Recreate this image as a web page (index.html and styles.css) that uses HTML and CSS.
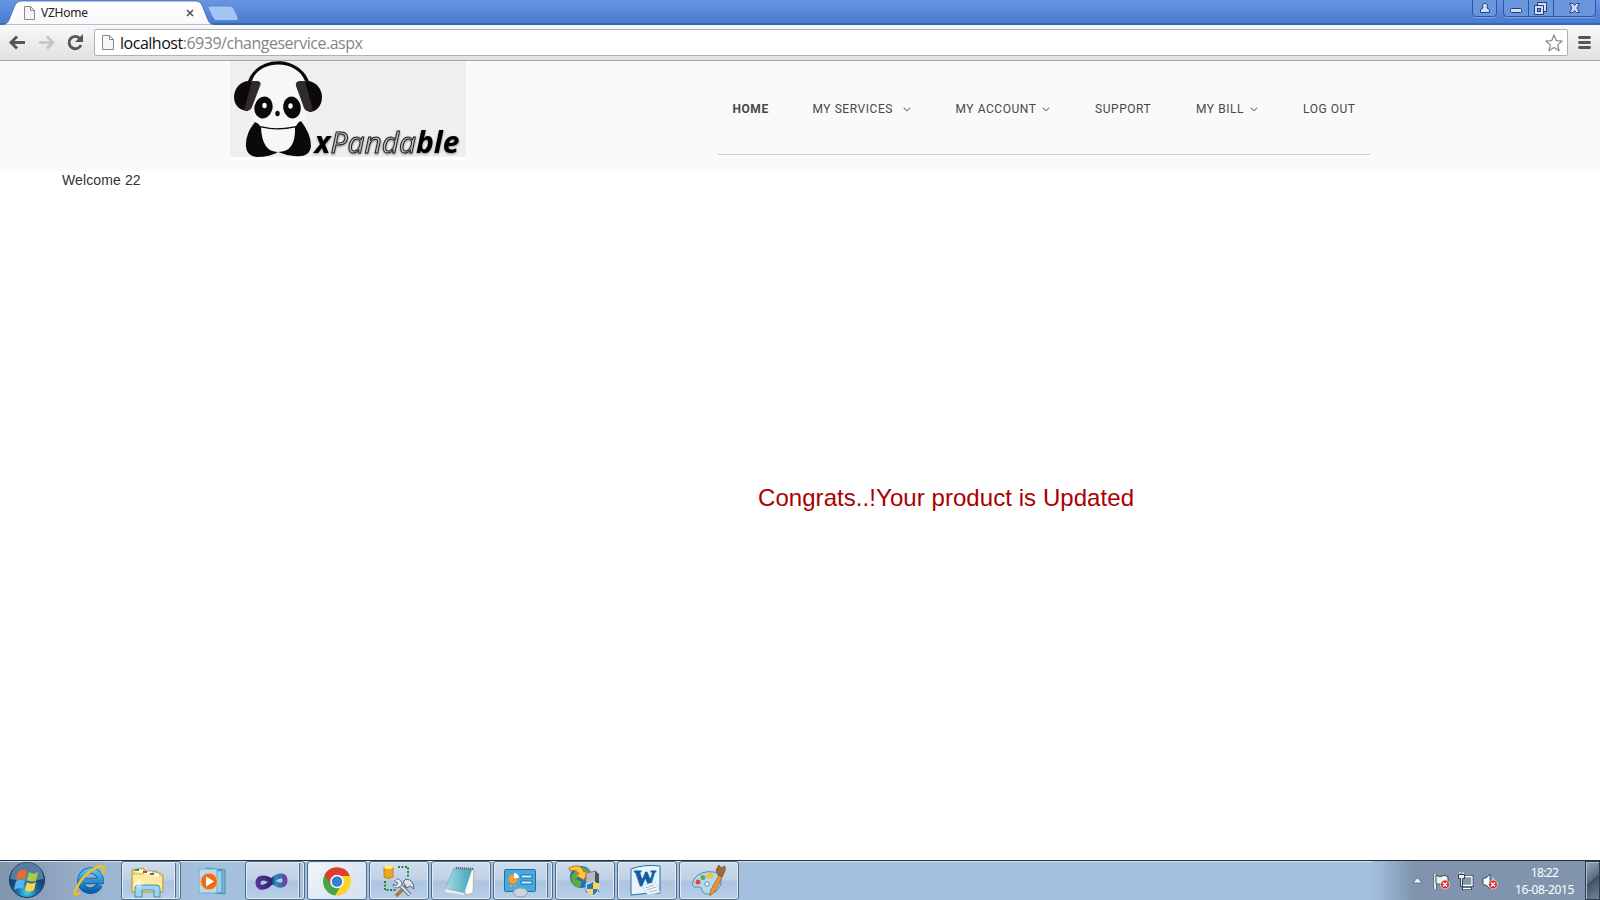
FILE: index.html
```
<!DOCTYPE html>
<html lang="en">
<head>
<meta charset="utf-8">
<title>VZHome</title>
<link rel="stylesheet" href="styles.css">
</head>
<body>
<div class="screen">
  <header class="tabstrip">
    <div class="tab">
      <svg class="tab-shape" width="242" height="25" viewBox="0 0 242 25">
        <defs><linearGradient id="tabfill" x2="0" y2="1"><stop offset="0" stop-color="#fff"/><stop offset="1" stop-color="#f8f8f8"/></linearGradient></defs>
        <path d="M0 25 Q7 25 9 20L15 5Q17 1 21 1H196Q200 1 202 5L208 20Q210 25 216 25Z" fill="url(#tabfill)" stroke="#3c62ad" stroke-width=".8"/>
        <path d="M210 6H230Q233 6 234 9L238 17.500Q239 20.500 236 20.500H217Q214 20.500 213 18L208.500 9Q207 6 210 6Z" fill="#a4c5f5" stroke="#5c87cf"/>
      </svg>
      <div class="tab-label">
        <svg width="11" height="14" viewBox="0 0 11 14"><path d="M.5.5H6.500L10.500 4.500V13.500H.5ZM6.500.5V4.500H10.500" fill="#f5f5f5" stroke="#8a8a8a"/></svg>
        <span class="tab-title">VZHome</span>
        <svg class="tab-close" width="8" height="8" viewBox="0 0 8 8"><path d="M1 1L7 7M7 1L1 7" stroke="#555" stroke-width="1.700"/></svg>
      </div>
    </div>
    <svg class="window-controls" width="128" height="18" viewBox="0 0 128 18">
      <g fill="#6a96de" stroke="#2f559f">
        <path d="M.5 0V13Q.5 16.500 4 16.500H21Q24.500 16.500 24.500 13V0"/>
        <path d="M31.500 0V13Q31.500 16.500 35 16.500H120Q123.500 16.500 123.500 13V0M56.500 0V16.500M81.500 0V16.500"/>
      </g>
      <path d="M1.500 17.500H23M33 17.500H122" stroke="#83a8e6"/>
      <g fill="#d0dff8" stroke="#263f74">
        <path d="M8.500 12.500V9.500L11 8Q9.500 3.500 13 3.500T15 8L17.500 9.500V12.500Z"/>
        <rect x="38.500" y="8.500" width="11" height="4" rx="1"/>
        <path d="M65.500 2.500H74.500V11.500H65.500Z"/><path d="M62.500 5.500H71.500V14.500H62.500Z"/><rect x="65.500" y="8.500" width="3" height="3" fill="#6a96de"/>
        <path d="M97.500 3.500H100.500L102.500 5.500L104.500 3.500H107.500L105 8L107.500 12.500H104.500L102.500 10.500L100.500 12.500H97.500L100 8Z"/>
      </g>
    </svg>
  </header>
  <div class="toolbar">
    <svg class="nav-buttons" width="94" height="35" viewBox="0 0 94 35">
      <path d="M25 17.500H12M17 11.500L11 17.500L17 23.500" fill="none" stroke="#555" stroke-width="2.900"/>
      <path d="M39 17.500H52M47 11.500L53 17.500L47 23.500" fill="none" stroke="#c3c3c3" stroke-width="2.600"/>
      <path d="M80 13.500A6.200 6.200 0 1 0 81 20" fill="none" stroke="#555" stroke-width="2.800"/><path d="M83 9V17H75Z" fill="#555"/>
    </svg>
    <div class="address">
      <svg class="page-icon" width="12" height="16" viewBox="0 0 12 16"><path d="M.5.5H7.500L11.500 4.500V14.500H.5ZM7.500.5V4.500H11.500" fill="#f7f7f7" stroke="#888"/></svg>
      <span class="url"><b>localhost</b>:6939/changeservice.aspx</span>
      <svg width="18" height="18" viewBox="0 0 18 18"><path d="M9 1L11.300 6.600L17.200 7L12.700 10.900L14.100 16.800L9 13.600L3.900 16.800L5.300 10.900L.8 7L6.700 6.600Z" fill="#fff" stroke="#888" stroke-width="1.200" stroke-linejoin="round"/></svg>
    </div>
    <svg class="menu" width="13" height="13" viewBox="0 0 13 13"><path d="M1.500 1.500H11.500M1.500 6.500H11.500M1.500 11.500H11.500" stroke="#555" stroke-width="2.800" stroke-linecap="round"/></svg>
  </div>

  <div class="site-header">
    <svg class="logo" width="236" height="99" viewBox="0 0 236 99">
      <rect width="236" height="96" fill="#f0efee"/><rect y="96" width="236" height="3" fill="#fff"/>
      <path d="M20 22Q25 2 48 2T78 22L76 56Q68 69 48 69T22 56Z" fill="#f7f7f7"/>
      <path d="M17 23C25 -7.500 71 -7.500 80 23L75 20C67 -2 29 -2 22 20Z" fill="#0b090a"/>
      <path d="M19 20C10 20 4 28 4 36C4 45 11 50 18 50L30 22Z" fill="#0b090a"/>
      <path d="M77 20C86 20 92 28 92 36C92 45 86 51 79 51L67 22Z" fill="#0b090a"/>
      <path d="M22 20H28Q32 21 30 25L22 46Q20 51 14 49Z" fill="#302b2d"/>
      <path d="M75 20H69Q65 21 66 25L74 47Q76 52 83 49Z" fill="#302b2d"/>
      <ellipse cx="33.500" cy="46.500" rx="9" ry="11" transform="rotate(15 33.500 46.500)" fill="#0b090a"/><ellipse cx="62" cy="46.500" rx="8.800" ry="11" transform="rotate(-10 62 46.500)" fill="#0b090a"/>
      <ellipse cx="34.500" cy="44.500" rx="2.200" ry="2.700" fill="#fff"/><ellipse cx="60.500" cy="45" rx="2.200" ry="2.700" fill="#fff"/>
      <ellipse cx="47.500" cy="52.500" rx="2.200" ry="2.800" fill="#0b090a"/>
      <path d="M25 61Q47 74 71 60Q81 73 81 85Q80 97 64 95Q55 94 48 91Q40 96 27 96Q17 95 16 86Q15 73 25 61Z" fill="#0b090a"/>
      <path d="M26 60Q48 72 70 59L66 65Q48 69 30 65Z" fill="#f7f7f7"/>
      <path d="M31 66.500Q48 70.500 65 66.500Q66 91 48 91Q32 91 31 66.500Z" fill="#f7f7f7"/>
      <text class="wordmark" y="92" textLength="145" lengthAdjust="spacingAndGlyphs" x="84.500">x<tspan class="outline">Panda</tspan>ble</text>
    </svg>
    <nav class="main-nav">
      <a class="active">HOME</a>
      <a>MY SERVICES <svg class="chevron wide" width="8" height="5" viewBox="0 0 8 5"><path d="M.7.7L4 3.800L7.300.7"/></svg></a>
      <a>MY ACCOUNT <svg class="chevron" width="8" height="5" viewBox="0 0 8 5"><path d="M.7.7L4 3.800L7.300.7"/></svg></a>
      <a>SUPPORT</a>
      <a>MY BILL <svg class="chevron" width="8" height="5" viewBox="0 0 8 5"><path d="M.7.7L4 3.800L7.300.7"/></svg></a>
      <a>LOG OUT</a>
    </nav>
  </div>
  <main class="content">
    <p class="welcome">Welcome 22</p>
    <p class="message">Congrats..!Your product is Updated</p>
  </main>

  <footer class="taskbar">
    <svg class="start" width="54" height="39" viewBox="0 0 54 39">
      <defs><radialGradient id="orb" cy=".85"><stop offset="0" stop-color="#48d6f4"/><stop offset=".55" stop-color="#1c6da5"/><stop offset="1" stop-color="#164572"/></radialGradient></defs>
      <circle cx="27" cy="19" r="17.500" fill="url(#orb)" stroke="#183a5d"/>
      <path d="M10.500 18A16.500 16.500 0 0 1 43.500 18Q27 22 10.500 18Z" fill="#b8d3e5" opacity=".4"/>
      <path d="M18 11Q23 7 27 10L25 18Q20 16 16 19Z" fill="#ef6a2d"/><path d="M29 11Q33 14 38 11L36 20Q31 22 27 19Z" fill="#a5cf45"/><path d="M16 20Q20 17 25 20L23 28Q18 26 14 29Z" fill="#58b5eb"/><path d="M27 21Q31 24 36 21L34 29Q29 32 25 29Z" fill="#ffd247"/>
    </svg>
    <svg class="ie" width="67" height="39" viewBox="54 0 67 39">
      <defs><linearGradient id="ieblue" x2="0" y2="1"><stop stop-color="#4fc5f3"/><stop offset="1" stop-color="#0860b1"/></linearGradient></defs>
      <path d="M99.500 24A10 10 0 1 1 100.500 20H82" fill="none" stroke="#0d5795" stroke-width="6.500"/>
      <path d="M99.500 24A10 10 0 1 1 100.500 20H82" fill="none" stroke="url(#ieblue)" stroke-width="5"/>
      <path d="M102 13Q108 3 98 6Q85 11 77 26Q71 37 80 32" fill="none" stroke="#f3bd25" stroke-width="2.500"/>
    </svg>
    <div class="task stack"><svg width="59" height="38" viewBox="0 0 59 38">
      <path d="M10 8L21 6L24 9H33L41 13V30H10Z" fill="#edcf70" stroke="#b99a43"/><path d="M13 9H21M22 11H30M28 13H37" stroke="#fff" stroke-width="3"/><path d="M13 8H17" stroke="#18a43a" stroke-width="2"/><path d="M21 10H25" stroke="#d53f2f" stroke-width="2"/><path d="M28 12H32" stroke="#2477c9" stroke-width="2"/>
      <path d="M11 13H28L40 15V29H11Z" fill="#ffeaa0"/><path d="M13 35V26Q13 23 17 23H34Q38 23 38 26V35H32V28H20V35Z" fill="#9bd6ef" stroke="#438fb4"/><path d="M17 17V27M12 22H22M14 19L20 25M20 19L14 25" stroke="#fff" opacity=".75"/>
    </svg></div>
    <svg class="pinned" width="59" height="38" viewBox="0 0 59 38">
      <path d="M23 7L42 9V33L23 31Z" fill="#78b8d9" stroke="#4588b2"/><path d="M19 9L39 10V32L19 31Z" fill="#9dd0e8" stroke="#4d94bf"/><path d="M16 8H34V32H16Z" fill="#b7dded" stroke="#73abc9"/><circle cx="26" cy="20.500" r="8.300" fill="#ef681c" stroke="#ffae66"/><path d="M23 15.500L31 20.500L23 25.500Z" fill="#fff"/>
    </svg>
    <div class="task stack"><svg width="59" height="38" viewBox="0 0 59 38">
      <defs><linearGradient id="vs"><stop stop-color="#553395"/><stop offset=".5" stop-color="#32246c"/><stop offset=".65" stop-color="#1f91c6"/><stop offset="1" stop-color="#6b439c"/></linearGradient></defs>
      <path d="M12 21C12 14 20 15 27 20C34 25 39 24 39 18C39 12 31 13 26 19C20 27 12 27 12 21Z" fill="none" stroke="url(#vs)" stroke-width="5"/>
    </svg></div>
    <div class="task current"><svg width="59" height="38" viewBox="0 0 59 38">
      <circle cx="29" cy="19.500" r="14" fill="#f9d22c"/><path d="M29 19.500L17 12.500A14 14 0 0 0 27 33.400L34 22Z" fill="#44a549"/><path d="M29 19.500L22.500 22L16.500 13A14 14 0 0 1 42 14H29Z" fill="#de3d32"/><circle cx="29" cy="19.500" r="6.800" fill="#fff"/><circle cx="29" cy="19.500" r="5.300" fill="#347fd0"/>
    </svg></div>
    <div class="task"><svg width="59" height="38" viewBox="0 0 59 38">
      <path d="M14 5V15Q18.500 18 23 15V5Z" fill="#e7aa18" stroke="#c4840f"/><ellipse cx="18.500" cy="5" rx="4.500" ry="2" fill="#ffe68b"/><path d="M28 5H38V16M15 19V28H26" fill="none" stroke="#168c26" stroke-width="2" stroke-dasharray="2 1.500"/><path d="M26 34L37 23" stroke="#a57b40" stroke-width="3.500"/><path d="M28 21L40 33" stroke="#617487" stroke-width="4"/><path d="M29 22L40 33" stroke="#dce5eb" stroke-width="2"/><path d="M24 18L28 21L26 24L23 22Q24 28 29 25L32 23Q32 17 26 17" fill="#edf1f4" stroke="#617487"/><path d="M33 20L36 17Q44 18 44 27L40 24L37 26Z" fill="#dbe3e8" stroke="#526678"/>
    </svg></div>
    <div class="task"><svg width="59" height="38" viewBox="0 0 59 38">
      <defs><linearGradient id="note"><stop stop-color="#a8dce6"/><stop offset="1" stop-color="#42a3b9"/></linearGradient></defs>
      <path d="M23 6L42 7L41 31L34 33Z" fill="#fbfbf7" stroke="#b0b0b0"/><path d="M22 6L40 7L32 31L13 27Z" fill="url(#note)" stroke="#66a9b9" stroke-width=".6"/><path d="M24 6L42 7" stroke="#5d6d76" stroke-width="2.500" stroke-dasharray="1 1"/><path d="M13 27L32 31V33L13 30Z" fill="#eee"/>
    </svg></div>
    <div class="task stack"><svg width="59" height="38" viewBox="0 0 59 38">
      <rect x="10.500" y="7.500" width="31" height="22" rx="1" fill="#49a8de" stroke="#1c70a5"/><circle cx="19" cy="17" r="4.500" fill="#ff9c2a"/><path d="M20 16V11A5 5 0 0 1 25 16Z" fill="#fff"/><path d="M27 13H38V16H27ZM27 19H38V22H27Z" fill="#d2f1ff" stroke="#176da5"/><path d="M16 24H18M20 24H22" stroke="#ff9c2a" stroke-width="2"/><ellipse cx="26.500" cy="30.500" rx="7" ry="4.500" fill="#cbd4d8" stroke="#8ea0aa"/>
    </svg></div>
    <div class="task"><svg width="59" height="38" viewBox="0 0 59 38">
      <circle cx="25" cy="15" r="11" fill="#1972bb"/><path d="M15 14L20 8L24 13L20 17L26 20L24 26Q15 24 15 14ZM27 5Q34 7 35 13L30 16L26 11Z" fill="#61a842"/><path d="M13 6Q25 0 28 10L32 9L28 18L19 13L23 12Q21 7 14 9Z" fill="#ffc340" stroke="#b87910"/><path d="M30 11L40 9V30H30Z" fill="#b8bcc0" stroke="#777f86"/><path d="M39 9L43 12V30H39Z" fill="#4d545a"/><path d="M37 19Q41 22 43 22Q43 31 37 34Q30 31 30 22Q34 22 37 19Z" fill="#2776c4" stroke="#eee"/><path d="M37 20V27H42Q43 23 43 22ZM31 27H37V33Q33 32 31 27Z" fill="#ffd746"/>
    </svg></div>
    <div class="task"><svg width="59" height="38" viewBox="0 0 59 38">
      <path d="M13 7Q26 2 42 4V31Q27 31 13 33Z" fill="#e8f4fc" stroke="#286ca8"/><text class="word-letter" x="16" y="24" textLength="22" lengthAdjust="spacingAndGlyphs">W</text><path d="M24 24L37 20L42 30L30 33Z" fill="#f5f8fa" stroke="#c2d5e3"/><path d="M27 26L36 23M29 28L38 25M31 30L39 28" stroke="#9bb8ca"/>
    </svg></div>
    <div class="task"><svg width="59" height="38" viewBox="0 0 59 38">
      <path d="M34 10Q21 8 14 17Q10 26 17 25Q22 24 22 29Q26 35 35 30Q42 25 41 16Q40 11 34 10Z" fill="#b5d8ef" stroke="#5787aa"/><circle cx="18" cy="20" r="2.500" fill="#da4b43"/><circle cx="23" cy="15.500" r="2.500" fill="#65a94b"/><ellipse cx="30" cy="13.500" rx="3.500" ry="2.500" fill="#efc62b"/><circle cx="27" cy="22" r="2.200" fill="#fff" stroke="#548dbb"/><path d="M30 34Q29 29 33 24L39 13L42 15L36 28Z" fill="#e99437" stroke="#a85f25" stroke-width=".7"/><path d="M38 13L36 8L39 3L41 6L45 4V9L42 15Z" fill="#a2683a" stroke="#704822" stroke-width=".7"/>
    </svg></div>
    <div class="tray">
      <svg width="100" height="38" viewBox="0 0 100 38">
        <path d="M6 22L10 17H11L15 22Z" fill="#eef3f7" stroke="#4c5e70" stroke-width=".7"/>
        <path d="M28 13V28" stroke="#3e4f60" stroke-width="3"/><path d="M28 13V28" stroke="#fff" stroke-width="1.700"/><path d="M29 14Q33 17 35 15Q38 13 41 16V22Q37 21 34 23Q31 24 29 22Z" fill="#edf2f6" stroke="#384857"/>
        <path d="M55 15.500H65V24.500H55Z" fill="#8098ad" stroke="#304355" stroke-width="3"/><path d="M55 15.500H65V24.500H55Z" fill="#8098ad" stroke="#fff" stroke-width="1.300"/><path d="M55 27.500H65" stroke="#304355" stroke-width="3"/><path d="M56 27.500H64" stroke="#fff" stroke-width="1.500"/><path d="M51.500 13.500H57.500V17.500H55.500V25.500H53.500V17.500H51.500Z" fill="#e8eef4" stroke="#304355"/><path d="M53 13V11M56 13V11" stroke="#fff"/>
        <path d="M76 17H79L83 13V28L79 24H76Z" fill="#fff" stroke="#3b4d60"/><path d="M85 16Q89 20 85 24" fill="none" stroke="#d2dde6"/>
        <g><circle cx="38" cy="23.500" r="4.400" fill="#dc2926" stroke="#fff" stroke-width=".6"/><path d="M36 21.500L40 25.500M40 21.500L36 25.500" stroke="#fff" stroke-width="1.400"/></g>
        <g><circle cx="86" cy="23.500" r="4.400" fill="#dc2926" stroke="#fff" stroke-width=".6"/><path d="M84 21.500L88 25.500M88 21.500L84 25.500" stroke="#fff" stroke-width="1.400"/></g>
      </svg>
      <div class="clock"><span>18:22</span><span class="date">16-08-2015</span></div>
      <div class="show-desktop"></div>
    </div>
  </footer>
</div>
</body>
</html>
```
FILE: styles.css
```
* { box-sizing: border-box; }
body { margin: 0; background: #fff; font-family: "Liberation Sans", Arial, sans-serif; }
svg { display: block; flex: none; }
p { margin: 0; }
.screen { width: 1600px; height: 900px; overflow: hidden; display: flex; flex-direction: column; }
.tabstrip { height: 25px; flex: none; display: flex; justify-content: space-between; background: linear-gradient(#6696e0, #4b7bd1 92%, #3967b6 93%); }
.tab { display: grid; }
.tab-shape, .tab-label { grid-area: 1 / 1; }
.tab-label { z-index: 1; width: 194px; height: 25px; padding-left: 24px; padding-top: 1px; display: flex; align-items: center; font: 12px/16px "Noto Sans", sans-serif; color: #222; }
.tab-title { margin-left: 6px; letter-spacing: -0.25px; }
.tab-close { margin-left: auto; }
.toolbar { height: 36px; flex: none; display: flex; align-items: center; background: linear-gradient(#f8f8f8, #e2e1e2); border-bottom: 1px solid #a5a5a5; }
.address { width: 1474px; height: 27px; border: 1px solid #b0b0b0; border-radius: 2px; background: #fff; display: flex; align-items: center; padding: 0 4px 0 7px; }
.url { margin-left: 6px; margin-right: auto; font: 16px/22px "Open Sans", sans-serif; color: #858585; letter-spacing: -0.48px; }
.url b { font-weight: 400; color: #111; }
.menu { margin-left: 10px; }
.site-header { height: 110px; flex: none; display: flex; align-items: flex-start; background: #fafafa; padding-left: 230px; }
.logo { overflow: visible; }
.wordmark { font: italic 700 30px "Open Sans", sans-serif; fill: #000; filter: drop-shadow(0 1px 1px #888); }
.wordmark .outline { font-weight: 400; fill: #bdbdbd; stroke: #222; stroke-width: 1; }
.main-nav { width: 652px; height: 94px; margin-left: 252px; padding: 39px 0 0 14.5px; display: grid; grid-template-columns: 80px 143px 139.5px 101px 107px 67px; border-bottom: 1px solid #d0d0d0; font: 12px/18px Roboto, sans-serif; letter-spacing: 0.55px; color: #484848; white-space: nowrap; }
.main-nav a { display: flex; height: 18px; align-items: center; }
.main-nav .active { font-weight: 700; }
.chevron { margin-left: 6px; fill: none; stroke: #777; stroke-width: 1.1; }
.chevron.wide { margin-left: 10px; }
.content { flex: 1; min-height: 0; }
.welcome { padding: 0 0 0 62px; font-size: 14px; line-height: 18px; color: #333; letter-spacing: 0.12px; }
.message { padding: 294px 0 0 758px; font-size: 24px; line-height: 30px; color: #a80000; white-space: nowrap; letter-spacing: 0.06px; }
.taskbar { height: 40px; flex: none; display: flex; border-top: 1px solid #26303d; background: linear-gradient(90deg, #8195ad, #9db6d2 110px, #a4c0df 200px, #a4c0df); box-shadow: inset 0 1px #d4e2f0; }
.task { width: 60px; height: 39px; flex: none; margin-right: 2px; border: 1px solid #526b86; border-radius: 3px; background: linear-gradient(#cfdded, #bfd1e6 48%, #aec4df 52%, #b7cfe8); box-shadow: inset 0 0 0 1px #deebf7; overflow: hidden; }
.task.stack { box-shadow: inset 0 0 0 1px #deebf7, inset -4px 0 #a9c1db, inset -5px 0 #526b86, inset -6px 0 #deebf7; }
.task.current { background: linear-gradient(135deg, #f2f6fb, #dce7f3 60%, #d4e1ef); }
.pinned { margin-right: 3px; }
.word-letter { font: 700 24px "Liberation Serif", serif; fill: #145ba1; stroke: #145ba1; stroke-width: 1.2; }
.tray { width: 228px; margin-left: auto; flex: none; display: flex; background: linear-gradient(90deg, #a4c0df, #8095ad 42px); padding-left: 35px; }
.clock { width: 78px; padding: 3px 3px 0 0; display: flex; flex-direction: column; align-items: center; color: #fff; font: 12px/17px "Noto Sans", sans-serif; letter-spacing: -0.6px; }
.date { letter-spacing: -0.35px; }
.show-desktop { width: 15px; height: 39px; border: 1px solid #2e3d4e; background: linear-gradient(140deg, #9aaabc, #596b80 48%, #3e5066 50%, #75879b); box-shadow: inset 1px 1px #aab9c8; }
```
